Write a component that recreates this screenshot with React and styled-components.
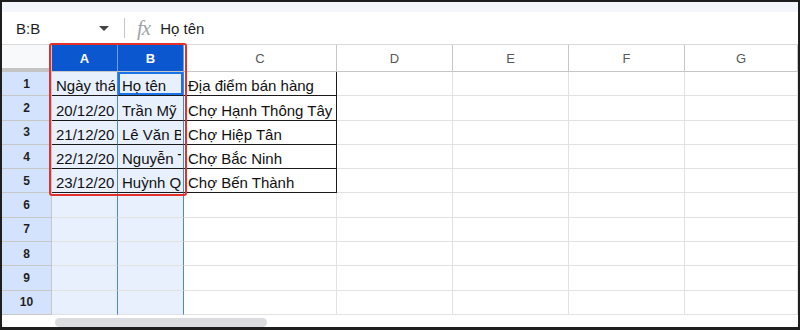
import styled, { createGlobalStyle } from 'styled-components'

const GlobalStyle = createGlobalStyle`
  * { box-sizing: border-box; }
  body {
    margin: 0;
    background: #fff;
    font-family: "Liberation Sans", Arial, sans-serif;
  }
`

const columns = [
  { key: 'A', width: '66px', sel: true },
  { key: 'B', width: '66px', sel: true },
  { key: 'C', width: '153px' },
  { key: 'D', width: '116px' },
  { key: 'E', width: '116px' },
  { key: 'F', width: '116px' },
  { key: 'G', width: '1fr' },
]

const data = [
  ['Ngày tháng', 'Họ tên', 'Địa điểm bán hàng'],
  ['20/12/2023', 'Trần Mỹ', 'Chợ Hạnh Thông Tây'],
  ['21/12/2023', 'Lê Văn Bình', 'Chợ Hiệp Tân'],
  ['22/12/2023', 'Nguyễn Thị', 'Chợ Bắc Ninh'],
  ['23/12/2023', 'Huỳnh Quang', 'Chợ Bến Thành'],
]

const Frame = styled.div`
  position: relative;
  width: 800px;
  height: 330px;
  border: 2px solid #1e1e1e;
  border-bottom-width: 3px;
  display: flex;
  flex-direction: column;
  overflow: hidden;
`

const TopStrip = styled.div`
  height: 10px;
  background: #f3f6fb;
`

const FormulaBar = styled.div`
  height: 33px;
  display: flex;
  align-items: center;
  padding-left: 14px;
  border-bottom: 1px solid #d9d9d9;
  font-size: 15px;
  color: #1f1f1f;
`

const NameBox = styled.div`
  width: 83px;
`

const Caret = styled.span`
  width: 0;
  height: 0;
  border-left: 5px solid transparent;
  border-right: 5px solid transparent;
  border-top: 5px solid #444;
  margin-right: 15px;
`

const Divider = styled.span`
  width: 1px;
  height: 20px;
  background: #c7c7c7;
  margin-right: 12px;
`

const Fx = styled.span`
  font-family: "Liberation Serif", "Times New Roman", serif;
  font-style: italic;
  font-size: 21px;
  color: #a0a4a8;
  margin-right: 10px;
  letter-spacing: -1px;
`

const Grid = styled.div`
  display: grid;
  grid-template-columns: 50px ${columns.map((c) => c.width).join(' ')};
  grid-template-rows: 27px repeat(10, 24.3px);
`

const Corner = styled.div`
  background: #f8f9fa;
  border-right: 1px solid #c7c7c7;
  border-bottom: 4px solid #c4c4c4;
`

const ColHead = styled.div`
  display: flex;
  align-items: center;
  justify-content: center;
  font-size: 13px;
  background: ${(p) => (p.$sel ? '#0b57d0' : '#fff')};
  color: ${(p) => (p.$sel ? '#fff' : '#575757')};
  font-weight: ${(p) => (p.$sel ? 'bold' : 'normal')};
  border-right: 1px solid ${(p) => (p.$sel ? '#6f9be6' : '#c7c7c7')};
  border-bottom: 1px solid #c7c7c7;
`

const RowHead = styled.div`
  display: flex;
  align-items: center;
  justify-content: center;
  font-size: 12px;
  font-weight: bold;
  color: #1f1f1f;
  background: #d3e3fd;
  border-right: 1px solid #c7c7c7;
  border-bottom: 1px solid #c7c7c7;
`

const Cell = styled.div`
  display: flex;
  align-items: flex-end;
  min-width: 0;
  padding: 0 2px 1px 4px;
  font-size: 15px;
  color: #111;
  background: ${(p) => (p.$sel ? '#e8f0fe' : '#fff')};
  border-right: 1px solid
    ${(p) => (p.$sel ? '#4a86e0' : p.$boxed ? '#1a1a1a' : '#e2e2e2')};
  border-bottom: 1px solid ${(p) => (p.$boxed ? '#1a1a1a' : '#e2e2e2')};
  ${(p) => p.$active && `box-shadow: inset 0 0 0 2px #1a73e8;`}
`

const CellText = styled.span`
  display: block;
  overflow: hidden;
  white-space: nowrap;
  width: 100%;
`

const ScrollRow = styled.div`
  height: 12px;
  padding: 3px 0 0 53px;
`

const Thumb = styled.div`
  width: 212px;
  height: 9px;
  border-radius: 5px;
  background: #dadce0;
`

const Highlight = styled.div`
  position: absolute;
  left: 47px;
  top: 41px;
  width: 138px;
  height: 153px;
  border: 2px solid #e2302c;
  border-radius: 3px;
  pointer-events: none;
`

export default function App() {
  return (
    <>
      <GlobalStyle />
      <Frame>
        <TopStrip />
        <FormulaBar>
          <NameBox>B:B</NameBox>
          <Caret />
          <Divider />
          <Fx>fx</Fx>
          <span>Họ tên</span>
        </FormulaBar>
        <Grid>
          <Corner />
          {columns.map((c) => (
            <ColHead key={c.key} $sel={c.sel}>
              {c.key}
            </ColHead>
          ))}
          {Array.from({ length: 10 }, (_, r) => [
            <RowHead key={`h${r}`}>{r + 1}</RowHead>,
            ...columns.map((c, ci) => {
              const value = data[r]?.[ci]
              const boxed = r < data.length && ci < 3
              return (
                <Cell
                  key={`${r}-${c.key}`}
                  $sel={c.sel}
                  $boxed={boxed}
                  $active={r === 0 && ci === 1}
                >
                  {value && <CellText>{value}</CellText>}
                </Cell>
              )
            }),
          ])}
        </Grid>
        <ScrollRow>
          <Thumb />
        </ScrollRow>
        <Highlight />
      </Frame>
    </>
  )
}
